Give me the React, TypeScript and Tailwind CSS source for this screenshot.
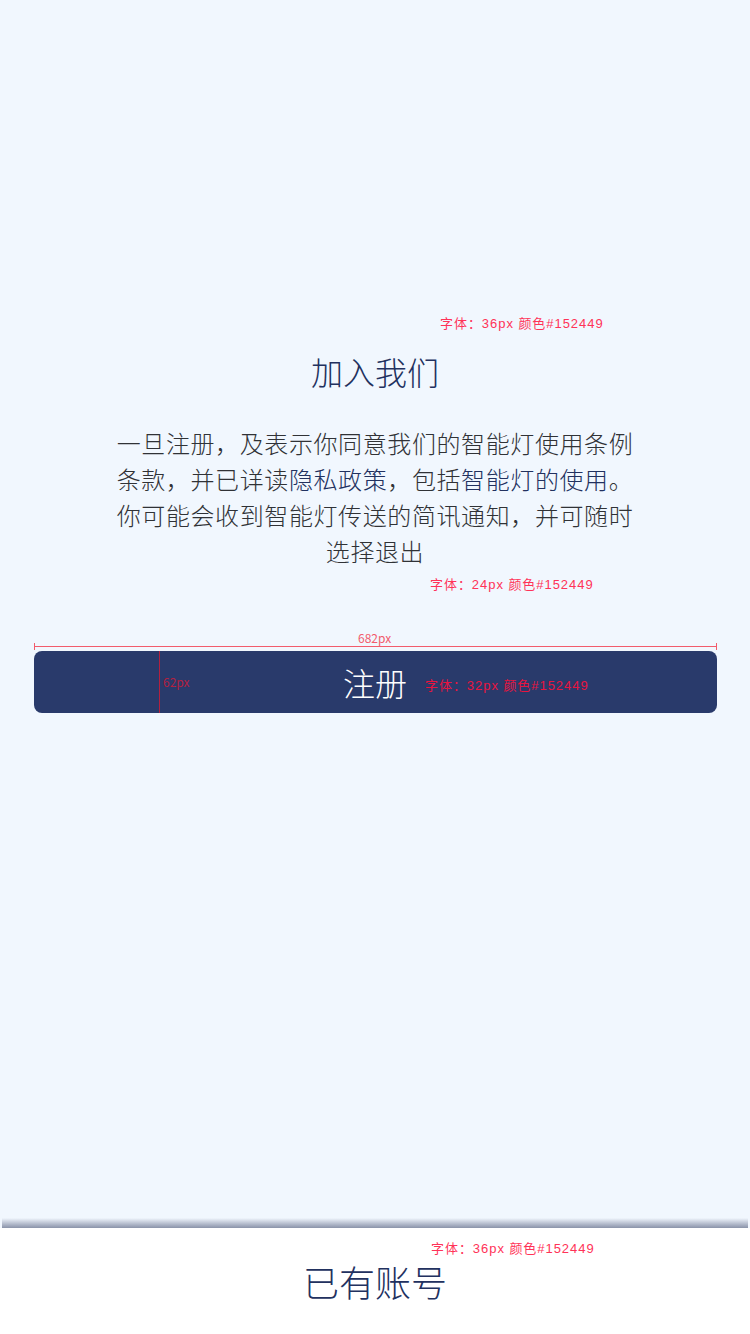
const note = "absolute text-[13px] leading-4 tracking-[0.95px] font-['Liberation_Sans','Noto_Sans_CJK_SC',sans-serif]";

export default function App() {
  return (
    <div className="relative min-h-[1334px] flex flex-col bg-[#f1f7fe] font-['Noto_Sans_CJK_SC','Noto_Sans',sans-serif]">
      <main className="flex-1 flex flex-col items-center pt-[351px]">
        <h1 className="text-[32px] leading-[40px] font-light text-[#22315f]">加入我们</h1>
        <p className="mt-[34px] w-[520px] text-center text-[24px] leading-[36px] tracking-[0.6px] font-light text-[#303236]">
          一旦注册，及表示你同意我们的智能灯使用条例条款，并已详读
          <span className="text-[#22315f]">隐私政策</span>，包括
          <span className="text-[#22315f]">智能灯的使用</span>。你可能会收到智能灯传送的简讯通知，并可随时选择退出
        </p>
        <button className="mt-[82px] w-[683px] h-[62px] rounded-lg bg-[#293a6b] text-white text-[32px] leading-none font-light flex items-center justify-center">
          注册
        </button>
      </main>
      <div className="h-[10px] mx-[2px] bg-gradient-to-b from-[#f1f7fe] to-[#8a93a9]" />
      <footer className="h-[106px] bg-white flex items-center justify-center">
        <span className="text-[36px] leading-[44px] font-light text-[#22315f]">已有账号</span>
      </footer>

      {/* design annotations */}
      <span className={`${note} left-[440px] top-[316px] text-[#ff3358]`}>字体：36px 颜色#152449</span>
      <span className={`${note} left-[430px] top-[577px] text-[#ff3358]`}>字体：24px 颜色#152449</span>
      <span className="absolute left-[358px] top-[630px] text-[12px] leading-4 text-[#f25c6c]">682px</span>
      <div className="absolute left-[34px] top-[643px] w-[683px] h-[7px] border-x border-[#f25c6c] flex items-center">
        <div className="w-full h-px bg-[#f25c6c]" />
      </div>
      <div className="absolute left-[159px] top-[651px] w-px h-[62px] bg-[#b3203f]" />
      <span className="absolute left-[163px] top-[674px] text-[12px] leading-4 text-[#b3203f]">62px</span>
      <span className={`${note} left-[425px] top-[678px] text-[#e8143f]`}>字体：32px 颜色#152449</span>
      <span className={`${note} left-[431px] top-[1241px] text-[#ff3358]`}>字体：36px 颜色#152449</span>
    </div>
  );
}
